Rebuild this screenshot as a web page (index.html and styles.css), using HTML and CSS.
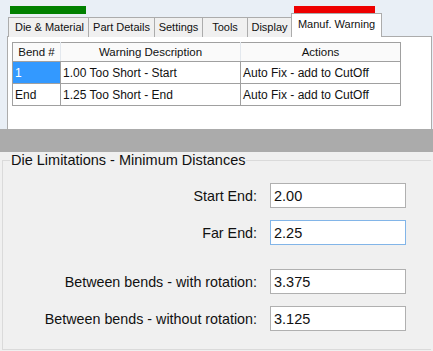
FILE: index.html
```html
<!DOCTYPE html>
<html>
<head>
<meta charset="UTF-8">
<title>Manuf. Warning</title>
<link rel="stylesheet" href="styles.css">
</head>
<body>
	<div class="topPart">
		<div class="flags">
			<div class="flag green"></div>
			<div class="flag red"></div>
		</div>
		<div class="tabs">
			<div class="tab t1">Die &amp; Material</div>
			<div class="tab t2">Part Details</div>
			<div class="tab t3">Settings</div>
			<div class="tab t4">Tools</div>
			<div class="tab t5">Display</div>
			<div class="tab active">Manuf. Warning</div>
		</div>
		<div class="tabPage">
			<table class="grid">
				<tr>
					<th class="c1">Bend #</th>
					<th class="c2">Warning Description</th>
					<th class="c3">Actions</th>
				</tr>
				<tr>
					<td class="sel">1</td>
					<td>1.00 Too Short - Start</td>
					<td>Auto Fix - add to CutOff</td>
				</tr>
				<tr>
					<td>End</td>
					<td>1.25 Too Short - End</td>
					<td>Auto Fix - add to CutOff</td>
				</tr>
			</table>
		</div>
	</div>
	<div class="band"></div>
	<div class="bottomPart">
		<fieldset class="group">
			<legend>Die Limitations - Minimum Distances</legend>
			<div class="row">
				<label>Start End:</label>
				<input type="text" value="2.00">
			</div>
			<div class="row">
				<label>Far End:</label>
				<input type="text" class="focus" value="2.25">
			</div>
			<div class="row wide">
				<label>Between bends - with rotation:</label>
				<input type="text" value="3.375">
			</div>
			<div class="row">
				<label>Between bends - without rotation:</label>
				<input type="text" value="3.125">
			</div>
		</fieldset>
	</div>
</body>
</html>
```

FILE: styles.css
```css
body {
	margin: 0;
	width: 433px;
	height: 351px;
	overflow: hidden;
	background: #f0f0f0;
	font-family: "Liberation Sans", Arial, sans-serif;
	color: #111;
}

.topPart {
	height: 129px;
	overflow: hidden;
	background: #e9eff6;
}

.flags {
	display: flex;
	height: 8px;
	padding-top: 6px;
}

.flag {
	height: 8px;
}

.green {
	background: #008000;
	width: 76px;
	margin-left: 10px;
}

.red {
	background: #ee0000;
	width: 81px;
	margin-left: 208px;
}

.tabs {
	display: flex;
	align-items: flex-end;
	height: 23px;
	margin-left: 8px;
	position: relative;
	z-index: 1;
}

.tab {
	height: 19px;
	line-height: 19px;
	font-size: 11px;
	text-align: center;
	background: #f0f0f0;
	border: 1px solid #acacac;
	border-bottom: none;
	margin-right: -1px;
}

.t1 { width: 77px; padding-left: 2px; }
.t2 { width: 65px; }
.t3 { width: 47px; }
.t4 { width: 44px; }
.t5 { width: 43px; }

.tab.active {
	width: 89px;
	height: 23px;
	line-height: 21px;
	background: #fff;
}

.tabPage {
	margin-left: 7px;
	width: 419px;
	height: 100px;
	margin-top: -1px;
	background: #fff;
	border: 1px solid #acacac;
	padding: 5px 0 0 4px;
}

.grid {
	border-collapse: collapse;
	font-size: 12px;
	table-layout: fixed;
}

.grid th {
	height: 18px;
	font-weight: normal;
	font-size: 11.5px;
	background: #fafafa;
	border: 1px solid #a0a0a0;
	border-right-color: #e3e8ee;
	padding: 0;
	text-align: center;
}

.grid th.c3 {
	border-right-color: #a0a0a0;
}

.grid td {
	height: 21px;
	border: 1px solid #a0a0a0;
	padding: 0 2px;
	white-space: nowrap;
}

.c1 { width: 47px; }
.c2 { width: 179px; }
.c3 { width: 159px; }

.grid td.sel {
	background: #3399ff;
	color: #fff;
}

.band {
	height: 23px;
	background: #ababab;
}

.bottomPart {
	padding: 0 2px;
}

.group {
	margin: 0;
	border: 1px solid #dadada;
	border-right: none;
	padding: 15px 0 0 0;
	height: 181px;
}

.group legend {
	font-size: 14.5px;
	padding: 0 1px;
	margin-left: 7px;
}

.row {
	display: flex;
	align-items: center;
	margin-bottom: 12px;
}

.row.wide {
	margin-top: 24px;
}

.row label {
	width: 254px;
	text-align: right;
	font-size: 14.3px;
	padding-right: 13px;
}

.row input {
	width: 128px;
	height: 23px;
	border: 1px solid #b0b0b0;
	padding: 0 3px;
	margin: 0;
	font-family: "Liberation Sans", Arial, sans-serif;
	font-size: 14.5px;
	color: #111;
}

.row input.focus {
	border-color: #82b5e8;
}
```
